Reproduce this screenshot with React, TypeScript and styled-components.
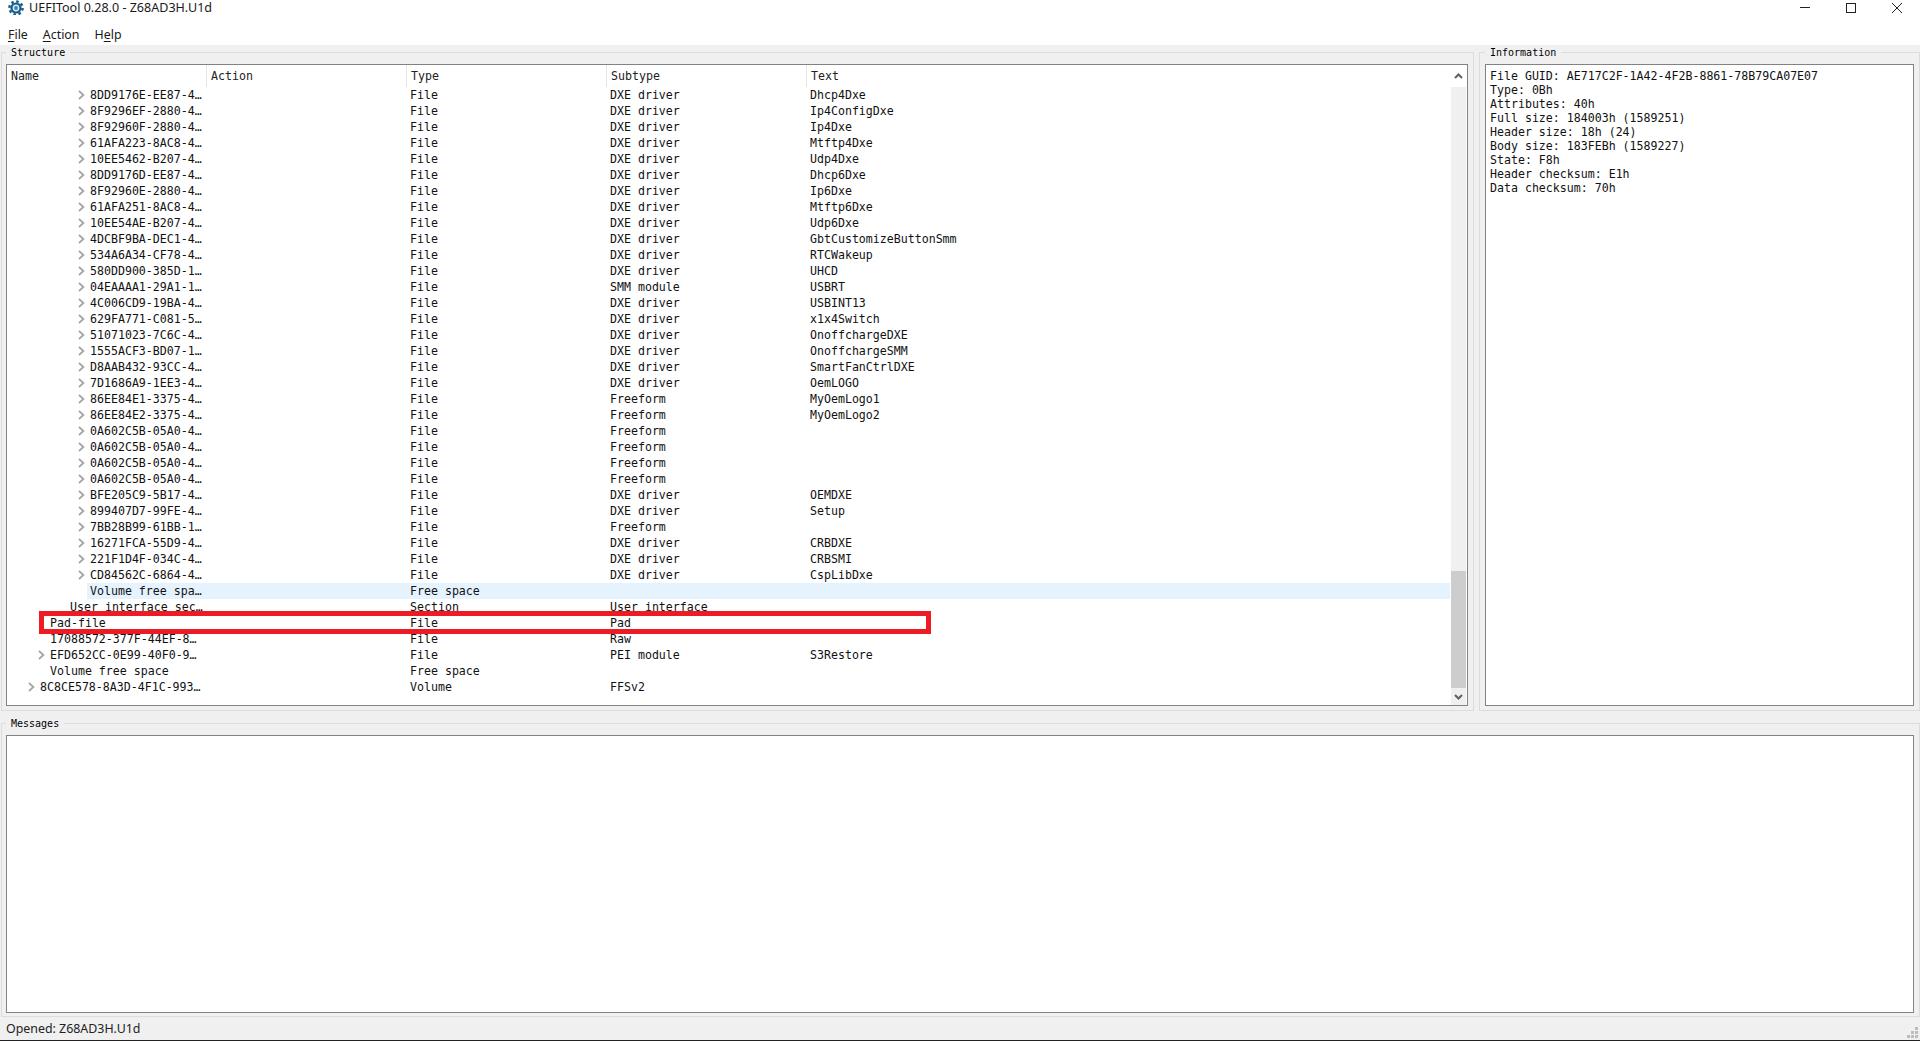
import React from 'react';
import styled, { createGlobalStyle } from 'styled-components';

const GlobalStyle = createGlobalStyle`
  html, body {
    margin: 0;
    padding: 0;
    height: 100%;
    overflow: hidden;
    background: #fff;
  }
`;

const MONO = `"DejaVu Sans Mono", "Liberation Mono", monospace`;
const UI = `"Noto Sans", "Open Sans", sans-serif`;

const Window = styled.div`
  width: 1920px;
  height: 1041px;
  display: flex;
  flex-direction: column;
  color: #111;
`;

const TitleBar = styled.div`
  height: 15px;
  display: flex;
  align-items: center;
  padding-left: 8px;
  font: 12.55px ${UI};
  color: #1a1a1a;
  background: #fff;
`;

const TitleText = styled.span`
  margin-left: 5px;
  flex: 1;
`;

const WindowControls = styled.div`
  display: flex;
  align-items: center;
`;

const WindowControl = styled.span`
  width: 46px;
  height: 15px;
  display: flex;
  align-items: center;
  justify-content: center;
`;

const MenuBar = styled.div`
  height: 30px;
  box-sizing: border-box;
  display: flex;
  align-items: center;
  gap: 15px;
  padding: 8px 0 0 8px;
  font: 12.4px ${UI};
  background: #fff;
`;

const MenuItem = styled.span`
  color: #1a1a1a;
`;

const Mnemonic = styled.span`
  text-decoration: underline;
  text-underline-offset: 2px;
`;

const Main = styled.div`
  height: 972px;
  box-sizing: border-box;
  background: #f0f0f0;
  padding: 1px 0 0 1px;
  display: grid;
  grid-template-columns: 1473px 441px;
  grid-template-rows: 665px 300px;
  column-gap: 5px;
  row-gap: 6px;
`;

const Group = styled.fieldset<{ $wide?: boolean; $left?: number; $bottom?: number }>`
  min-width: 0;
  margin: 0;
  box-sizing: border-box;
  display: flex;
  border: 1px solid #dcdcdc;
  padding: 0 5px ${(p) => p.$bottom ?? 4}px ${(p) => p.$left ?? 4}px;
  ${(p) => (p.$wide ? 'grid-column: 1 / span 2;' : '')}
`;

const GroupTitle = styled.legend`
  margin-left: 0;
  padding: 0 5px;
  height: 12px;
  font: 10px/14px ${MONO};
  color: #000;
`;

const Frame = styled.div`
  flex: 1;
  min-width: 0;
  margin-top: 6px;
  display: flex;
  background: #fff;
  border: 1px solid #828282;
`;

const TreeArea = styled.div`
  position: relative;
  flex: 1;
  min-width: 0;
  font: 11.6px/16px ${MONO};
`;

const HeaderRow = styled.div`
  display: grid;
  grid-template-columns: 200px 200px 200px 200px 1fr;
  height: 22px;
`;

const HeaderCell = styled.div`
  box-sizing: border-box;
  padding-left: 4px;
  line-height: 22px;
  color: #222;
  border-right: 1px solid #e5e5e5;
  &:last-child {
    border-right: 0;
  }
`;

const Row = styled.div`
  display: grid;
  grid-template-columns: 200px 200px 200px 200px 1fr;
  height: 16px;
  margin-right: 1px;
`;

const Cell = styled.div<{ $active?: boolean }>`
  padding-left: 3px;
  white-space: nowrap;
  background: ${(p) => (p.$active ? '#e5f3ff' : 'transparent')};
`;

const NameCell = styled.div<{ $indent: number; $active?: boolean }>`
  display: flex;
  align-items: center;
  white-space: nowrap;
  padding-left: ${(p) => p.$indent}px;
  background: ${(p) =>
    p.$active
      ? `linear-gradient(to right, transparent ${p.$indent - 3}px, #e5f3ff ${p.$indent - 3}px)`
      : 'transparent'};
`;

const Expander = styled.span`
  width: 14px;
  margin-left: -14px;
  padding-left: 2px;
  box-sizing: border-box;
  display: flex;
  align-items: center;
`;

const Highlight = styled.div`
  position: absolute;
  left: 32px;
  top: 546px;
  width: 892px;
  height: 23px;
  box-sizing: border-box;
  border: 5px solid #ed1c24;
  pointer-events: none;
`;

const ScrollBar = styled.div`
  width: 15px;
  margin-right: 1px;
  display: flex;
  flex-direction: column;
`;

const ScrollUp = styled.div`
  height: 22px;
  display: flex;
  align-items: center;
  justify-content: center;
  background: #fff;
`;

const ScrollTrack = styled.div`
  flex: 1;
  display: flex;
  flex-direction: column;
  justify-content: flex-end;
  background: #f0f0f0;
`;

const ScrollThumb = styled.div`
  height: 117px;
  background: #cdcdcd;
`;

const ScrollDown = styled.div`
  height: 17px;
  display: flex;
  align-items: center;
  justify-content: center;
  background: #f0f0f0;
`;

const InfoText = styled.pre`
  margin: 0;
  padding: 4px;
  font: 11.6px/14px ${MONO};
  color: #111;
`;

const StatusBar = styled.div`
  height: 23px;
  display: flex;
  align-items: center;
  justify-content: space-between;
  padding: 0 2px 0 6px;
  font: 12.4px ${UI};
  color: #222;
  background: #f0f0f0;
  border-bottom: 1px solid #222;
`;

const Grip = styled.svg`
  align-self: flex-end;
  margin-bottom: 2px;
`;

type Item = {
  name: string;
  indent: number;
  expand?: boolean;
  type: string;
  subtype?: string;
  text?: string;
  active?: boolean;
};

const file = (name: string, subtype: string, text = ''): Item => ({
  name,
  indent: 83,
  expand: true,
  type: 'File',
  subtype,
  text,
});

const ITEMS: Item[] = [
  file('8DD9176E-EE87-4…', 'DXE driver', 'Dhcp4Dxe'),
  file('8F9296EF-2880-4…', 'DXE driver', 'Ip4ConfigDxe'),
  file('8F92960F-2880-4…', 'DXE driver', 'Ip4Dxe'),
  file('61AFA223-8AC8-4…', 'DXE driver', 'Mtftp4Dxe'),
  file('10EE5462-B207-4…', 'DXE driver', 'Udp4Dxe'),
  file('8DD9176D-EE87-4…', 'DXE driver', 'Dhcp6Dxe'),
  file('8F92960E-2880-4…', 'DXE driver', 'Ip6Dxe'),
  file('61AFA251-8AC8-4…', 'DXE driver', 'Mtftp6Dxe'),
  file('10EE54AE-B207-4…', 'DXE driver', 'Udp6Dxe'),
  file('4DCBF9BA-DEC1-4…', 'DXE driver', 'GbtCustomizeButtonSmm'),
  file('534A6A34-CF78-4…', 'DXE driver', 'RTCWakeup'),
  file('580DD900-385D-1…', 'DXE driver', 'UHCD'),
  file('04EAAAA1-29A1-1…', 'SMM module', 'USBRT'),
  file('4C006CD9-19BA-4…', 'DXE driver', 'USBINT13'),
  file('629FA771-C081-5…', 'DXE driver', 'x1x4Switch'),
  file('51071023-7C6C-4…', 'DXE driver', 'OnoffchargeDXE'),
  file('1555ACF3-BD07-1…', 'DXE driver', 'OnoffchargeSMM'),
  file('D8AAB432-93CC-4…', 'DXE driver', 'SmartFanCtrlDXE'),
  file('7D1686A9-1EE3-4…', 'DXE driver', 'OemLOGO'),
  file('86EE84E1-3375-4…', 'Freeform', 'MyOemLogo1'),
  file('86EE84E2-3375-4…', 'Freeform', 'MyOemLogo2'),
  file('0A602C5B-05A0-4…', 'Freeform'),
  file('0A602C5B-05A0-4…', 'Freeform'),
  file('0A602C5B-05A0-4…', 'Freeform'),
  file('0A602C5B-05A0-4…', 'Freeform'),
  file('BFE205C9-5B17-4…', 'DXE driver', 'OEMDXE'),
  file('899407D7-99FE-4…', 'DXE driver', 'Setup'),
  file('7BB28B99-61BB-1…', 'Freeform'),
  file('16271FCA-55D9-4…', 'DXE driver', 'CRBDXE'),
  file('221F1D4F-034C-4…', 'DXE driver', 'CRBSMI'),
  file('CD84562C-6864-4…', 'DXE driver', 'CspLibDxe'),
  { name: 'Volume free spa…', indent: 83, type: 'Free space', active: true },
  { name: 'User interface sec…', indent: 63, type: 'Section', subtype: 'User interface' },
  { name: 'Pad-file', indent: 43, type: 'File', subtype: 'Pad' },
  { name: '17088572-377F-44EF-8…', indent: 43, type: 'File', subtype: 'Raw' },
  { name: 'EFD652CC-0E99-40F0-9…', indent: 43, expand: true, type: 'File', subtype: 'PEI module', text: 'S3Restore' },
  { name: 'Volume free space', indent: 43, type: 'Free space' },
  { name: '8C8CE578-8A3D-4F1C-993…', indent: 33, expand: true, type: 'Volume', subtype: 'FFSv2' },
];

const INFO = `File GUID: AE717C2F-1A42-4F2B-8861-78B79CA07E07
Type: 0Bh
Attributes: 40h
Full size: 184003h (1589251)
Header size: 18h (24)
Body size: 183FEBh (1589227)
State: F8h
Header checksum: E1h
Data checksum: 70h`;

const Chevron = () => (
  <svg width="7" height="10" viewBox="0 0 7 10">
    <path d="M1 1l4.4 4L1 9" fill="none" stroke="#a6a6a6" strokeWidth="1.8" />
  </svg>
);

const ScrollArrow = ({ down }: { down?: boolean }) => (
  <svg width="9" height="6" viewBox="0 0 9 6">
    <path
      d={down ? 'M1 1l3.5 3.5L8 1' : 'M1 5l3.5-3.5L8 5'}
      fill="none"
      stroke="#606060"
      strokeWidth="2"
    />
  </svg>
);

const AppIcon = () => (
  <svg width="16" height="16" viewBox="0 0 16 16">
    <circle cx="8" cy="8" r="5.6" fill="#0f5c8c" />
    <circle cx="8" cy="8" r="6.6" fill="none" stroke="#0f5c8c" strokeWidth="2.4" strokeDasharray="2.6 2.58" />
    <circle cx="8" cy="8" r="3.4" fill="#dcebf3" />
    <rect x="6.4" y="6.2" width="3.2" height="3.6" fill="#3d7ea6" />
  </svg>
);

const App: React.FC = () => {
  return (
    <>
      <GlobalStyle />
      <Window>
        <TitleBar>
          <AppIcon />
          <TitleText>UEFITool 0.28.0 - Z68AD3H.U1d</TitleText>
          <WindowControls>
            <WindowControl>
              <svg width="10" height="2" viewBox="0 0 10 2">
                <rect y="0" width="10" height="1" fill="#222" />
              </svg>
            </WindowControl>
            <WindowControl>
              <svg width="10" height="10" viewBox="0 0 10 10">
                <rect x="0.5" y="0.5" width="9" height="9" fill="none" stroke="#222" />
              </svg>
            </WindowControl>
            <WindowControl>
              <svg width="10" height="10" viewBox="0 0 10 10">
                <path d="M0 0l10 10M10 0L0 10" stroke="#222" strokeWidth="1" />
              </svg>
            </WindowControl>
          </WindowControls>
        </TitleBar>
        <MenuBar>
          <MenuItem>
            <Mnemonic>F</Mnemonic>ile
          </MenuItem>
          <MenuItem>
            <Mnemonic>A</Mnemonic>ction
          </MenuItem>
          <MenuItem>
            H<Mnemonic>e</Mnemonic>lp
          </MenuItem>
        </MenuBar>
        <Main>
          <Group>
            <GroupTitle>Structure</GroupTitle>
            <Frame>
              <TreeArea>
                <HeaderRow>
                  <HeaderCell>Name</HeaderCell>
                  <HeaderCell>Action</HeaderCell>
                  <HeaderCell>Type</HeaderCell>
                  <HeaderCell>Subtype</HeaderCell>
                  <HeaderCell>Text</HeaderCell>
                </HeaderRow>
                {ITEMS.map((item, i) => (
                  <Row key={i}>
                    <NameCell $indent={item.indent} $active={item.active}>
                      {item.expand && (
                        <Expander>
                          <Chevron />
                        </Expander>
                      )}
                      {item.name}
                    </NameCell>
                    <Cell $active={item.active} />
                    <Cell $active={item.active}>{item.type}</Cell>
                    <Cell $active={item.active}>{item.subtype}</Cell>
                    <Cell $active={item.active}>{item.text}</Cell>
                  </Row>
                ))}
                <Highlight />
              </TreeArea>
              <ScrollBar>
                <ScrollUp>
                  <ScrollArrow />
                </ScrollUp>
                <ScrollTrack>
                  <ScrollThumb />
                </ScrollTrack>
                <ScrollDown>
                  <ScrollArrow down />
                </ScrollDown>
              </ScrollBar>
            </Frame>
          </Group>
          <Group $left={5}>
            <GroupTitle>Information</GroupTitle>
            <Frame>
              <InfoText>{INFO}</InfoText>
            </Frame>
          </Group>
          <Group $wide $bottom={3}>
            <GroupTitle>Messages</GroupTitle>
            <Frame />
          </Group>
        </Main>
        <StatusBar>
          <span>Opened: Z68AD3H.U1d</span>
          <Grip width="11" height="11" viewBox="0 0 11 11">
            <g fill="#bdbdbd">
              <rect x="8" y="0" width="3" height="3" />
              <rect x="4" y="4" width="3" height="3" />
              <rect x="8" y="4" width="3" height="3" />
              <rect x="0" y="8" width="3" height="3" />
              <rect x="4" y="8" width="3" height="3" />
              <rect x="8" y="8" width="3" height="3" />
            </g>
          </Grip>
        </StatusBar>
      </Window>
    </>
  );
};

export default App;
